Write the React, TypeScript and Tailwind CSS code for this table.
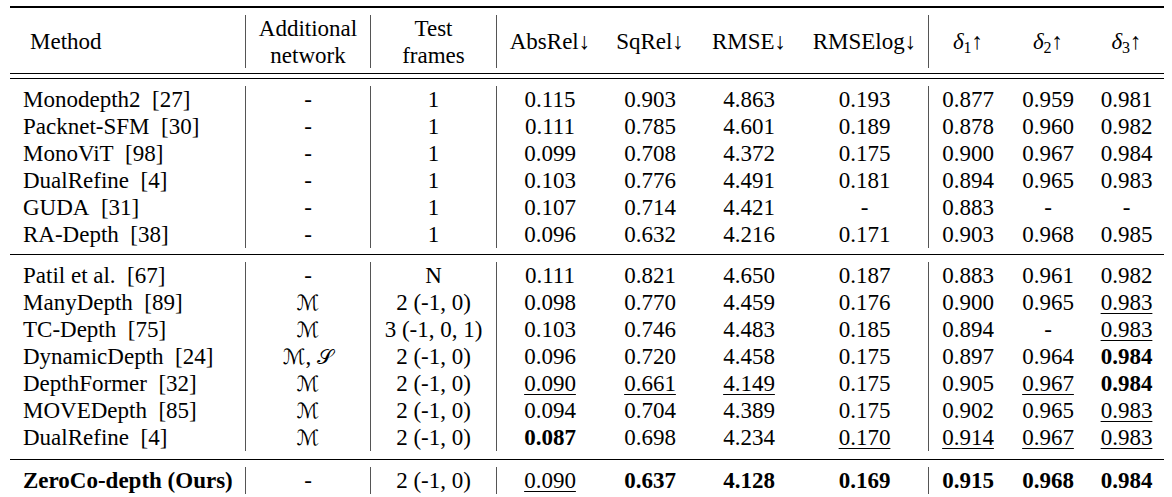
import type { ReactNode } from 'react'

const cols = 'grid-cols-[236px_125px_126px_106px_94px_104px_128px_78px_82px_75px]'
const ruled = new Set([0, 1, 2, 6])

type Row = { name: string; net: string; frames: string; vals: string[] }

// "_" prefix = underlined (second best), "*" prefix = bold (best)
const groupA: Row[] = [
  { name: 'Monodepth2\u00a0\u00a0[27]', net: '-', frames: '1', vals: ['0.115', '0.903', '4.863', '0.193', '0.877', '0.959', '0.981'] },
  { name: 'Packnet-SFM\u00a0\u00a0[30]', net: '-', frames: '1', vals: ['0.111', '0.785', '4.601', '0.189', '0.878', '0.960', '0.982'] },
  { name: 'MonoViT\u00a0\u00a0[98]', net: '-', frames: '1', vals: ['0.099', '0.708', '4.372', '0.175', '0.900', '0.967', '0.984'] },
  { name: 'DualRefine\u00a0\u00a0[4]', net: '-', frames: '1', vals: ['0.103', '0.776', '4.491', '0.181', '0.894', '0.965', '0.983'] },
  { name: 'GUDA\u00a0\u00a0[31]', net: '-', frames: '1', vals: ['0.107', '0.714', '4.421', '-', '0.883', '-', '-'] },
  { name: 'RA-Depth\u00a0\u00a0[38]', net: '-', frames: '1', vals: ['0.096', '0.632', '4.216', '0.171', '0.903', '0.968', '0.985'] },
]

const groupB: Row[] = [
  { name: 'Patil et al.\u00a0\u00a0[67]', net: '-', frames: 'N', vals: ['0.111', '0.821', '4.650', '0.187', '0.883', '0.961', '0.982'] },
  { name: 'ManyDepth\u00a0\u00a0[89]', net: 'M', frames: '2 (-1, 0)', vals: ['0.098', '0.770', '4.459', '0.176', '0.900', '0.965', '_0.983'] },
  { name: 'TC-Depth\u00a0\u00a0[75]', net: 'M', frames: '3 (-1, 0, 1)', vals: ['0.103', '0.746', '4.483', '0.185', '0.894', '-', '_0.983'] },
  { name: 'DynamicDepth\u00a0\u00a0[24]', net: 'MS', frames: '2 (-1, 0)', vals: ['0.096', '0.720', '4.458', '0.175', '0.897', '0.964', '*0.984'] },
  { name: 'DepthFormer\u00a0\u00a0[32]', net: 'M', frames: '2 (-1, 0)', vals: ['_0.090', '_0.661', '_4.149', '0.175', '0.905', '_0.967', '*0.984'] },
  { name: 'MOVEDepth\u00a0\u00a0[85]', net: 'M', frames: '2 (-1, 0)', vals: ['0.094', '0.704', '4.389', '0.175', '0.902', '0.965', '_0.983'] },
  { name: 'DualRefine\u00a0\u00a0[4]', net: 'M', frames: '2 (-1, 0)', vals: ['*0.087', '0.698', '4.234', '_0.170', '_0.914', '_0.967', '_0.983'] },
]

const ours: Row = {
  name: '*ZeroCo-depth (Ours)',
  net: '-',
  frames: '2 (-1, 0)',
  vals: ['_0.090', '*0.637', '*4.128', '*0.169', '*0.915', '*0.968', '*0.984'],
}

function Val({ v }: { v: string }) {
  if (v.startsWith('_')) return <span className="underline decoration-1 underline-offset-[3px]">{v.slice(1)}</span>
  if (v.startsWith('*')) return <span className="font-bold">{v.slice(1)}</span>
  return <>{v}</>
}

function Cal({ c }: { c: string }) {
  return <span className="font-['DejaVu_Sans',serif] text-[21px]">{c}</span>
}

function Net({ v }: { v: string }) {
  if (v === 'M') return <Cal c={'\u2133'} />
  if (v === 'MS')
    return (
      <>
        <Cal c={'\u2133'} />, <Cal c={'\u{1D4AE}'} />
      </>
    )
  return <>{v}</>
}

function Cell({ i, children, left }: { i: number; children: ReactNode; left?: boolean }) {
  return (
    <div
      className={`h-[27px] leading-[27px] whitespace-nowrap ${left ? 'pl-[13px] text-left' : 'text-center'} ${
        ruled.has(i) ? 'border-r border-[#555]' : ''
      }`}
    >
      {children}
    </div>
  )
}

function TableRow({ r }: { r: Row }) {
  return (
    <div className={`grid ${cols}`}>
      <Cell i={0} left>
        <Val v={r.name} />
      </Cell>
      <Cell i={1}>
        <Net v={r.net} />
      </Cell>
      <Cell i={2}>{r.frames}</Cell>
      {r.vals.map((v, k) => (
        <Cell key={k} i={k + 3}>
          <Val v={v} />
        </Cell>
      ))}
    </div>
  )
}

function Delta({ n }: { n: number }) {
  return (
    <span>
      <span className="italic">δ</span>
      <sub className="text-[16px]">{n}</sub>↑
    </span>
  )
}

function HeadCell({ i, children, left }: { i: number; children: ReactNode; left?: boolean }) {
  return (
    <div
      className={`flex h-[53px] items-center leading-[27px] ${left ? 'pl-[20px]' : 'justify-center text-center'} ${
        ruled.has(i) ? 'border-r border-[#555]' : ''
      }`}
    >
      {children}
    </div>
  )
}

export default function App() {
  return (
    <div className="h-[497px] w-[1172px] overflow-hidden bg-white pl-[10px] pt-[6px] font-['Liberation_Serif',serif] text-[23px] text-black">
      <div className="w-[1154px]">
        <div className="h-[2px] bg-black" />

        <div className={`grid ${cols} pb-[5px] pt-[7px]`}>
          <HeadCell i={0} left>
            Method
          </HeadCell>
          <HeadCell i={1}>
            <div>
              Additional
              <br />
              network
            </div>
          </HeadCell>
          <HeadCell i={2}>
            <div>
              Test
              <br />
              frames
            </div>
          </HeadCell>
          <HeadCell i={3}>AbsRel↓</HeadCell>
          <HeadCell i={4}>SqRel↓</HeadCell>
          <HeadCell i={5}>RMSE↓</HeadCell>
          <HeadCell i={6}>RMSElog↓</HeadCell>
          <HeadCell i={7}>
            <Delta n={1} />
          </HeadCell>
          <HeadCell i={8}>
            <Delta n={2} />
          </HeadCell>
          <HeadCell i={9}>
            <Delta n={3} />
          </HeadCell>
        </div>

        <div className="h-px bg-black" />
        <div className="h-[4px]" />
        <div className="h-px bg-black" />

        <div className="pb-[6px] pt-[7px]">
          {groupA.map((r) => (
            <TableRow key={r.name} r={r} />
          ))}
        </div>

        <div className="h-px bg-black" />

        <div className="pb-[8px] pt-[7px]">
          {groupB.map((r) => (
            <TableRow key={r.name} r={r} />
          ))}
        </div>

        <div className="h-px bg-black" />

        <div className="pt-[7px]">
          <TableRow r={ours} />
        </div>
      </div>
    </div>
  )
}
